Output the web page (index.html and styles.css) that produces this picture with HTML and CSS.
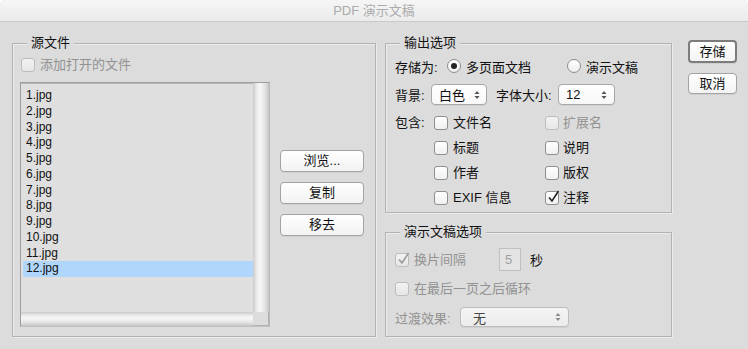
FILE: index.html
```html
<!DOCTYPE html>
<html lang="zh-CN">
<head>
<meta charset="utf-8">
<title>PDF 演示文稿</title>
<link rel="stylesheet" href="styles.css">
</head>
<body>
<div class="window">
  <div class="titlebar">PDF 演示文稿</div>
  <div class="main">
    <div class="group src">
      <div class="legend">源文件</div>
      <div class="check disabled add"><span class="box"></span><span>添加打开的文件</span></div>
      <div class="src-body">
        <div class="list">
          <div class="items">
            <div class="item">1.jpg</div>
            <div class="item">2.jpg</div>
            <div class="item">3.jpg</div>
            <div class="item">4.jpg</div>
            <div class="item">5.jpg</div>
            <div class="item">6.jpg</div>
            <div class="item">7.jpg</div>
            <div class="item">8.jpg</div>
            <div class="item">9.jpg</div>
            <div class="item">10.jpg</div>
            <div class="item">11.jpg</div>
            <div class="item sel">12.jpg</div>
          </div>
          <div class="vbar"></div>
          <div class="hbar"></div>
          <div class="corner"></div>
        </div>
        <div class="src-buttons">
          <div class="btn">浏览...</div>
          <div class="btn">复制</div>
          <div class="btn">移去</div>
        </div>
      </div>
    </div>

    <div class="right">
      <div class="group out">
        <div class="legend">输出选项</div>
        <div class="row r1">
          <span class="lbl w-save">存储为:</span>
          <span class="opt opt1"><span class="radio on"></span><span>多页面文档</span></span>
          <span class="opt"><span class="radio"></span><span>演示文稿</span></span>
        </div>
        <div class="row r2">
          <span class="lbl w-bg">背景:</span>
          <span class="select sel-bg"><span>白色</span><svg class="arrows" width="6" height="10" viewBox="0 0 6 10"><polygon points="0.5,4 3,1 5.5,4"/><polygon points="0.5,6 3,9 5.5,6"/></svg></span>
          <span class="lbl w-fs">字体大小:</span>
          <span class="select sel-fs"><span>12</span><svg class="arrows" width="6" height="10" viewBox="0 0 6 10"><polygon points="0.5,4 3,1 5.5,4"/><polygon points="0.5,6 3,9 5.5,6"/></svg></span>
        </div>
        <div class="row r3">
          <span class="lbl w-inc">包含:</span>
          <div class="inc-grid">
            <div class="check"><span class="box"></span><span>文件名</span></div>
            <div class="check disabled c2"><span class="box"></span><span>扩展名</span></div>
            <div class="check"><span class="box"></span><span>标题</span></div>
            <div class="check c2"><span class="box"></span><span>说明</span></div>
            <div class="check"><span class="box"></span><span>作者</span></div>
            <div class="check c2"><span class="box"></span><span>版权</span></div>
            <div class="check"><span class="box"></span><span>EXIF 信息</span></div>
            <div class="check c2"><span class="box"><svg class="tick" width="14" height="14" viewBox="0 0 14 14"><path d="M3 7.5 L6 11 L12.5 1"/></svg></span><span>注释</span></div>
          </div>
        </div>
      </div>

      <div class="group pres">
        <div class="legend">演示文稿选项</div>
        <div class="row p1">
          <div class="check disabled w-interval"><span class="box"><svg class="tick" width="14" height="14" viewBox="0 0 14 14"><path d="M3 7.5 L6 11 L12.5 1"/></svg></span><span>换片间隔</span></div>
          <span class="num">5</span>
          <span class="sec">秒</span>
        </div>
        <div class="row p2">
          <div class="check disabled"><span class="box"></span><span>在最后一页之后循环</span></div>
        </div>
        <div class="row p3">
          <span class="lbl disabled-text w-trans">过渡效果:</span>
          <span class="select dis sel-trans"><span>无</span><svg class="arrows" width="6" height="10" viewBox="0 0 6 10"><polygon points="0.5,4 3,1 5.5,4"/><polygon points="0.5,6 3,9 5.5,6"/></svg></span>
        </div>
      </div>
    </div>

    <div class="actions">
      <div class="btn default">存储</div>
      <div class="btn cancel">取消</div>
    </div>
  </div>
</div>
</body>
</html>
```

FILE: styles.css
```css
html, body {
  margin: 0;
  padding: 0;
  background: #ffffff;
}
body {
  width: 748px;
  height: 349px;
  overflow: hidden;
  font-family: "Liberation Sans", "Noto Sans CJK SC", sans-serif;
  font-size: 13px;
  color: #111;
}
.window {
  width: 748px;
  height: 349px;
  background: #dcdcdc;
  border-radius: 5px 5px 0 0;
  overflow: hidden;
}
.titlebar {
  height: 21px;
  line-height: 22px;
  text-align: center;
  color: #ababab;
  font-size: 13px;
  background: linear-gradient(#f6f6f6, #ebebeb);
  border-bottom: 1px solid #c9c9c9;
}
.main {
  display: flex;
  padding-left: 12px;
}

/* group boxes */
.group {
  box-sizing: border-box;
  border: 1px solid #b2b2b2;
  box-shadow: inset 1px 1px 0 #ececec, 1px 1px 0 #ececec;
}
.legend {
  display: block;
  width: max-content;
  margin: -9px 0 0 14px;
  padding: 0 4px;
  height: 16px;
  line-height: 16px;
  background: #dcdcdc;
  color: #111;
}
.src {
  margin-top: 21px;
  width: 364px;
  height: 294px;
}
.right {
  margin-left: 9px;
  width: 287px;
  display: flex;
  flex-direction: column;
  margin-top: 21px;
}
.out {
  height: 170px;
  padding-left: 9px;
}
.pres {
  margin-top: 19px;
  height: 105px;
  padding-left: 9px;
}
.out .legend, .pres .legend {
  margin-left: 5px;
}

/* checkboxes */
.check {
  display: flex;
  align-items: center;
  height: 14px;
  line-height: 14px;
}
.check .box {
  box-sizing: border-box;
  width: 14px;
  height: 14px;
  flex: none;
  border: 1px solid #8f8f8f;
  border-radius: 3px;
  background: linear-gradient(#ffffff, #f0f0f0);
  margin-right: 5px;
  position: relative;
}
.check.disabled {
  color: #929292;
}
.check.disabled .box {
  border-color: #bdbdbd;
  background: linear-gradient(#f2f2f2, #e6e6e6);
}
.tick {
  position: absolute;
  left: 0;
  top: -2px;
  fill: none;
  stroke: #222;
  stroke-width: 1.6;
}
.check.disabled .tick {
  stroke: #9a9a9a;
}
.add {
  margin: 7px 0 0 8px;
}

/* source list */
.src-body {
  display: flex;
  margin-top: 10px;
}
.list {
  margin-left: 7px;
  width: 250px;
  height: 245px;
  box-sizing: border-box;
  border: 1px solid #9d9d9d;
  border-bottom-color: #c2c2c2;
  border-right-color: #b9b9b9;
  box-shadow: inset 0 1px 0 #b7b7b7;
  background: #dfdfdf;
  display: grid;
  grid-template-columns: 1fr 16px;
  grid-template-rows: 1fr 14px;
}
.items {
  padding: 5px 0 0 2px;
  overflow: hidden;
}
.item {
  height: 15.75px;
  line-height: 15.75px;
  font-size: 12px;
  padding-left: 3px;
  color: #111;
}
.item.sel {
  background: #b0d6fb;
}
.vbar {
  background: linear-gradient(90deg, #c9c9c9, #ededed 25%, #f7f7f7 45%, #e3e3e3 75%, #c4c4c4);
}
.hbar {
  background: linear-gradient(#c9c9c9, #ededed 25%, #f7f7f7 45%, #e3e3e3 75%, #c4c4c4);
}
.corner {
  background: #dcdcdc;
  border-right: 1px solid #b0b0b0;
  border-bottom: 1px solid #b0b0b0;
}
.src-buttons {
  margin-left: 10px;
  padding-top: 68px;
  display: flex;
  flex-direction: column;
  gap: 10px;
}

/* buttons */
.btn {
  box-sizing: border-box;
  width: 84px;
  height: 22px;
  line-height: 20px;
  text-align: center;
  border: 1px solid #a3a3a3;
  border-radius: 4px;
  background: linear-gradient(#ffffff, #f3f3f3);
  box-shadow: 0 1px 0 rgba(0, 0, 0, 0.06);
  color: #111;
  font-size: 13px;
}
.actions {
  margin-left: 16px;
  padding-top: 18px;
  display: flex;
  flex-direction: column;
}
.btn.default {
  width: 49px;
  height: 23px;
  line-height: 19px;
  border: 2px solid #7c7c7c;
}
.btn.cancel {
  width: 49px;
  height: 21px;
  line-height: 19px;
  margin-top: 10px;
}

/* output options */
.row {
  display: flex;
  align-items: center;
}
.lbl {
  flex: none;
  white-space: nowrap;
}
.r1 {
  margin-top: 5px;
  height: 20px;
}
.w-save { width: 52px; }
.opt {
  display: flex;
  align-items: center;
}
.opt1 { width: 120px; }
.radio {
  box-sizing: border-box;
  width: 14px;
  height: 14px;
  border: 1px solid #8c8c8c;
  border-radius: 50%;
  background: linear-gradient(#ffffff, #eeeeee);
  margin-right: 5px;
  display: flex;
  align-items: center;
  justify-content: center;
}
.radio.on::after {
  content: "";
  width: 6px;
  height: 6px;
  border-radius: 50%;
  background: #222;
}
.r2 {
  margin-top: 8px;
  height: 21px;
}
.w-bg { width: 36px; }
.w-fs { width: 62px; margin-left: 9px; }
.select {
  box-sizing: border-box;
  height: 21px;
  border: 1px solid #a8a8a8;
  border-radius: 4px;
  background: linear-gradient(#ffffff, #f7f7f7);
  display: flex;
  align-items: center;
  justify-content: space-between;
  padding: 0 7px 0 11px;
  box-shadow: 0 1px 0 rgba(0, 0, 0, 0.05);
}
.arrows {
  fill: #555;
  flex: none;
}
.sel-bg { width: 56px; padding-left: 7px; padding-right: 6px; }
.sel-fs { width: 57px; padding-left: 7px; }
.r3 {
  margin-top: 5px;
  align-items: flex-start;
}
.w-inc {
  width: 39px;
  height: 25px;
  line-height: 25px;
}
.inc-grid {
  display: grid;
  grid-template-columns: 111px 1fr;
  grid-auto-rows: 25px;
  align-items: center;
}
.c2 .box { margin-right: 4px; }

/* presentation options */
.p1 {
  margin-top: 8px;
  height: 23px;
}
.w-interval { width: 104px; }
.num {
  box-sizing: border-box;
  width: 22px;
  height: 23px;
  line-height: 21px;
  border: 1px solid #c0c0c0;
  background: #e4e4e4;
  color: #a0a0a0;
  padding-left: 5px;
}
.sec {
  margin-left: 9px;
  color: #111;
}
.p2 {
  margin-top: 11px;
  height: 14px;
}
.p3 {
  margin-top: 11px;
  height: 20px;
}
.disabled-text { color: #929292; }
.w-trans { width: 65px; }
.sel-trans {
  width: 109px;
  height: 20px;
  padding-left: 12px;
  border-color: #bdbdbd;
  background: linear-gradient(#f4f4f4, #ececec);
  color: #444;
}
.sel-trans .arrows { fill: #8a8a8a; }
```
